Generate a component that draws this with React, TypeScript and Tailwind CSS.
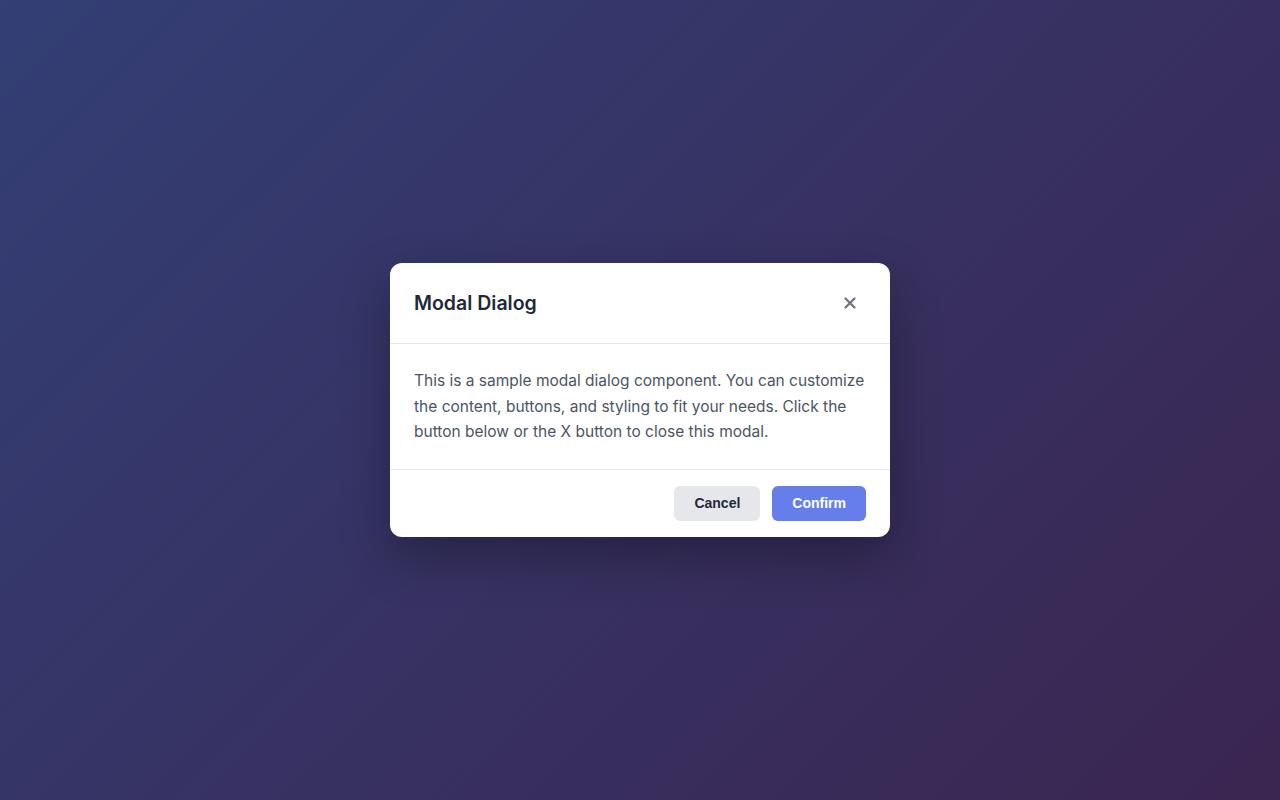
import React from 'react';

const App = () => {
    return (
        <div className="relative w-full h-screen bg-[linear-gradient(135deg,#667eea_0%,#764ba2_100%)] font-['Inter',sans-serif]">
            {/* Backdrop */}
            <div className="absolute inset-0 bg-black/50 flex items-center justify-center">
                <div className="w-[500px] bg-white rounded-xl shadow-[0_20px_50px_rgba(0,0,0,0.3)] overflow-hidden">
                    {/* Header */}
                    <div className="flex items-center justify-between px-6 py-6 border-b border-[#e5e7eb]">
                        <h2 className="text-[19.5px] font-semibold text-[#1f2937] leading-8">Modal Dialog</h2>
                        <button className="w-8 h-8 flex items-center justify-center rounded-md text-[#6b7280]">
                            <svg width="12" height="12" viewBox="0 0 12 12" fill="none" stroke="currentColor" strokeWidth="2.2" strokeLinecap="round">
                                <path d="M1.5 1.5 L10.5 10.5 M10.5 1.5 L1.5 10.5" />
                            </svg>
                        </button>
                    </div>

                    {/* Body */}
                    <div className="px-6 py-6 border-b border-[#e5e7eb]">
                        <p className="text-[15.5px] leading-[1.65] text-[#4b5563]">
                            This is a sample modal dialog component. You can customize the content, buttons, and styling to fit your needs. Click the button below or the X button to close this modal.
                        </p>
                    </div>

                    {/* Footer */}
                    <div className="flex justify-end gap-3 px-6 py-4">
                        <button className="h-[35px] px-5 rounded-md bg-[#e5e7eb] text-[#1f2937] text-sm font-bold font-['Liberation_Sans',Arial,sans-serif]">
                            Cancel
                        </button>
                        <button className="h-[35px] px-5 rounded-md bg-[#667eea] text-white text-sm font-bold font-['Liberation_Sans',Arial,sans-serif]">
                            Confirm
                        </button>
                    </div>
                </div>
            </div>
        </div>
    );
};

export default App;
